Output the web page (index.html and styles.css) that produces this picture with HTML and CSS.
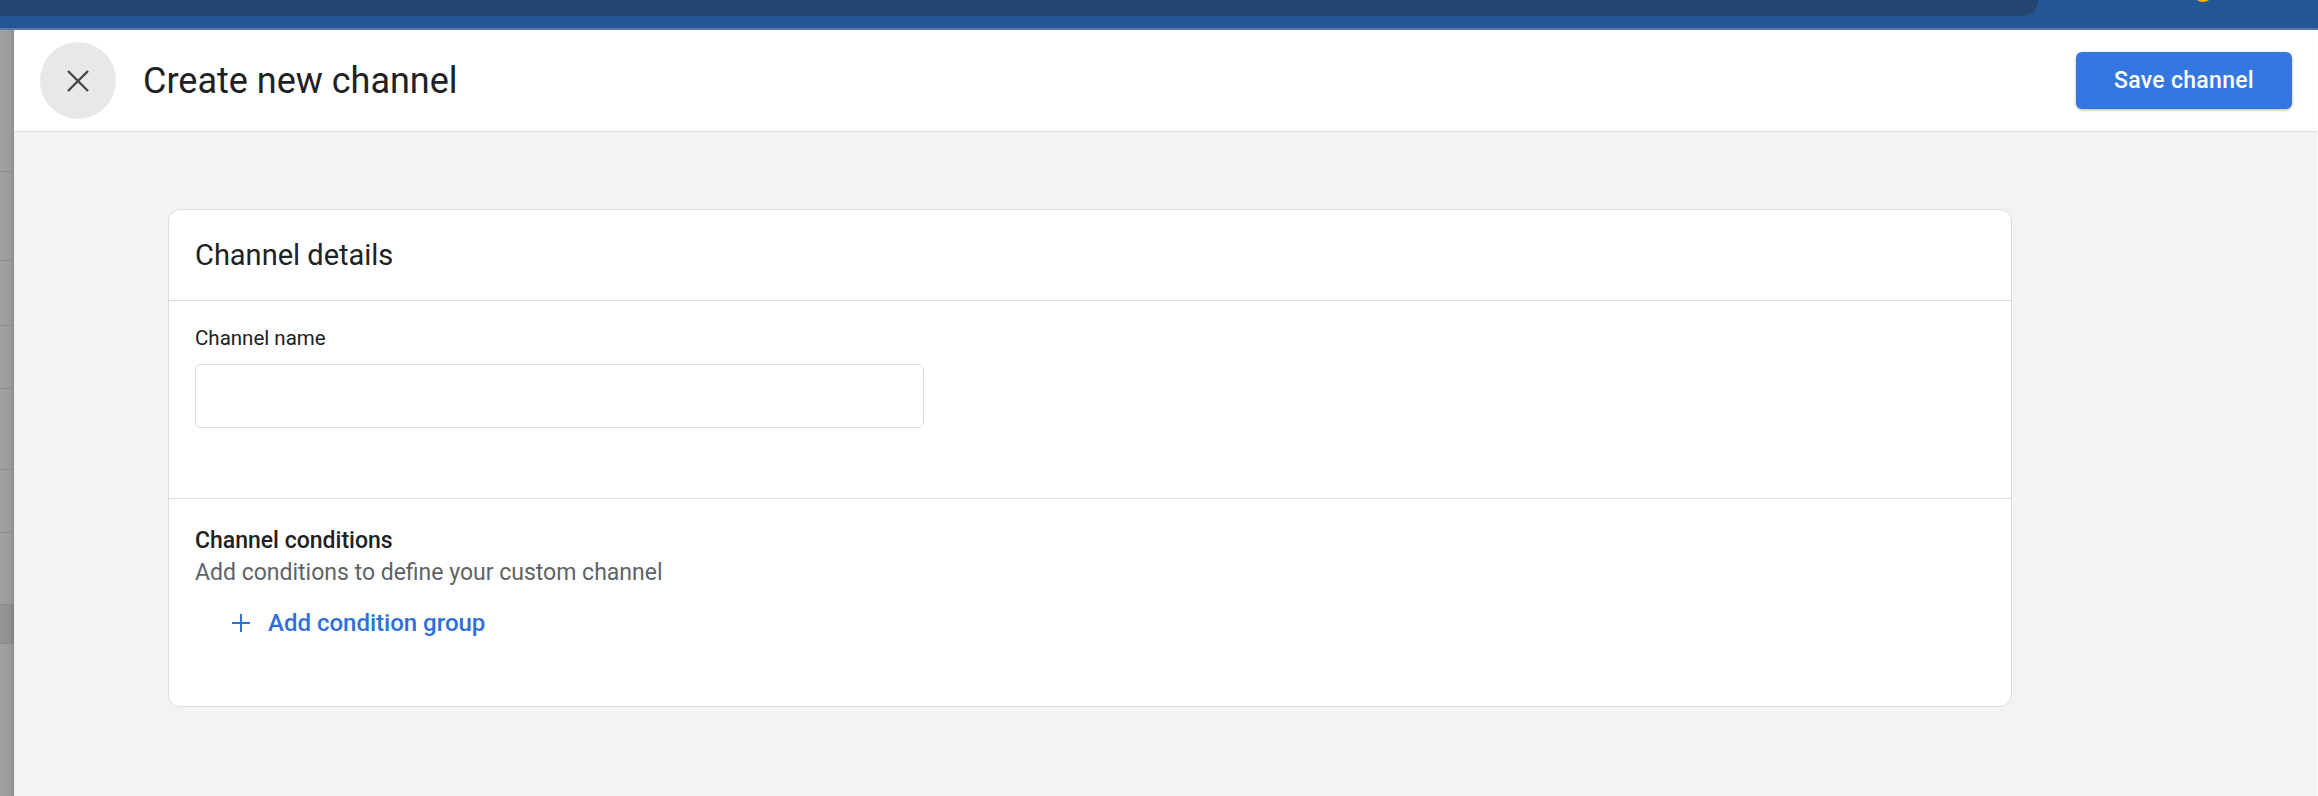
FILE: index.html
```
<!DOCTYPE html>
<html lang="en">
<head>
    <meta charset="UTF-8">
    <meta name="viewport" content="width=device-width, initial-scale=1.0">
    <title>Create new channel</title>
    <link rel="stylesheet" href="styles.css">
</head>
<body>
    <div class="topbar">
        <div class="topbar-tab"></div>
        <div class="topbar-avatar"></div>
    </div>

    <div class="layout">
        <div class="backdrop">
            <div class="backdrop-row" style="height: 142px"></div>
            <div class="backdrop-row" style="height: 89px"></div>
            <div class="backdrop-row" style="height: 65px"></div>
            <div class="backdrop-row" style="height: 63px"></div>
            <div class="backdrop-row" style="height: 81px"></div>
            <div class="backdrop-row" style="height: 63px"></div>
            <div class="backdrop-row" style="height: 72px"></div>
            <div class="backdrop-row backdrop-row-dark" style="height: 39px"></div>
        </div>

        <div class="dialog">
            <header class="dialog-header">
                <button class="close-btn" aria-label="Close">
                    <svg width="22" height="22" viewBox="0 0 22 22">
                        <path d="M1 1 21 21M21 1 1 21" stroke="#444746" stroke-width="2.4" fill="none"/>
                    </svg>
                </button>
                <h1 class="dialog-title">Create new channel</h1>
                <button class="save-btn">Save channel</button>
            </header>

            <main class="dialog-body">
                <section class="card">
                    <div class="card-header">Channel details</div>

                    <div class="card-section name-section">
                        <label class="field-label" for="channel-name">Channel name</label>
                        <input type="text" id="channel-name" class="field-input">
                    </div>

                    <div class="card-section conditions-section">
                        <h2 class="section-title">Channel conditions</h2>
                        <p class="section-subtitle">Add conditions to define your custom channel</p>
                        <button class="add-group">
                            <svg width="20" height="20" viewBox="0 0 20 20">
                                <path d="M10 1v18M1 10h18" stroke="#2f6fdc" stroke-width="2" fill="none"/>
                            </svg>
                            <span>Add condition group</span>
                        </button>
                    </div>
                </section>
            </main>
        </div>
    </div>
</body>
</html>
```

FILE: styles.css
```
body {
    margin: 0;
    height: 796px;
    overflow: hidden;
    font-family: Roboto, "Liberation Sans", sans-serif;
    color: #202124;
    background-color: #f1f3f4;
}

/* app bar behind the dialog */
.topbar {
    display: flex;
    height: 28px;
    background-color: #245594;
    border-bottom: 2px solid #5a7aa6;
}
.topbar-tab {
    width: 2038px;
    height: 16px;
    background-color: #22446f;
    border-bottom-right-radius: 18px;
}
.topbar-avatar {
    width: 22px;
    height: 22px;
    margin: -20px 0 0 154px;
    border-radius: 50%;
    background-color: #f4b400;
}

.layout {
    display: flex;
    height: 766px;
}

/* dimmed page peeking out on the left */
.backdrop {
    width: 14px;
    flex-shrink: 0;
    background: linear-gradient(to right, #a2a2a2, #9c9c9c 70%, #8d8d8d);
}
.backdrop-row {
    box-sizing: border-box;
    border-bottom: 1px solid #8c8c8c;
}
.backdrop-row-dark {
    background-color: rgba(0, 0, 0, 0.08);
}

.dialog {
    flex: 1;
    display: flex;
    flex-direction: column;
    background-color: #f1f3f4;
    border-right: 1px solid #fafafa;
}

.dialog-header {
    display: flex;
    align-items: center;
    height: 101px;
    padding: 0 25px 0 26px;
    background-color: #fff;
    border-bottom: 1px solid #dadce0;
}
.close-btn {
    display: flex;
    align-items: center;
    justify-content: center;
    width: 76px;
    height: 77px;
    padding: 0;
    border: none;
    border-radius: 50%;
    background-color: #e8e8e8;
    cursor: pointer;
}
.dialog-title {
    margin: 0 0 0 27px;
    font-size: 36px;
    font-weight: 400;
    line-height: 44px;
}
.save-btn {
    margin-left: auto;
    width: 216px;
    height: 57px;
    border: none;
    border-radius: 6px;
    background-color: #3477e0;
    color: #fff;
    font-family: inherit;
    font-size: 23px;
    font-weight: 500;
    letter-spacing: 0.3px;
    box-shadow: 0 1px 3px rgba(0, 0, 0, 0.3);
    cursor: pointer;
}

.dialog-body {
    flex: 1;
    padding: 77px 0 0 154px;
}

.card {
    width: 1844px;
    box-sizing: border-box;
    background-color: #fff;
    border: 1px solid #dadce0;
    border-radius: 12px;
}
.card-header {
    display: flex;
    align-items: center;
    height: 90px;
    padding: 0 26px;
    font-size: 29px;
}
.card-section {
    padding: 0 26px;
    border-top: 1px solid #dadce0;
}

.name-section {
    padding-top: 25px;
    padding-bottom: 70px;
}
.field-label {
    display: block;
    font-size: 20.5px;
    line-height: 24px;
}
.field-input {
    display: block;
    width: 729px;
    height: 64px;
    box-sizing: border-box;
    margin-top: 14px;
    border: 1px solid #dadce0;
    border-radius: 6px;
    font-family: inherit;
    font-size: 20px;
}

.conditions-section {
    padding-top: 29px;
    padding-bottom: 65px;
}
.section-title {
    margin: 0;
    font-size: 23px;
    font-weight: 500;
    line-height: 26px;
}
.section-subtitle {
    margin: 6px 0 0;
    font-size: 23px;
    line-height: 26px;
    color: #5f6368;
}
.add-group {
    display: flex;
    align-items: center;
    gap: 17px;
    height: 36px;
    margin: 19px 0 0 36px;
    padding: 0;
    border: none;
    background: none;
    color: #2f6fdc;
    font-family: inherit;
    font-size: 24px;
    font-weight: 500;
    cursor: pointer;
}
```
